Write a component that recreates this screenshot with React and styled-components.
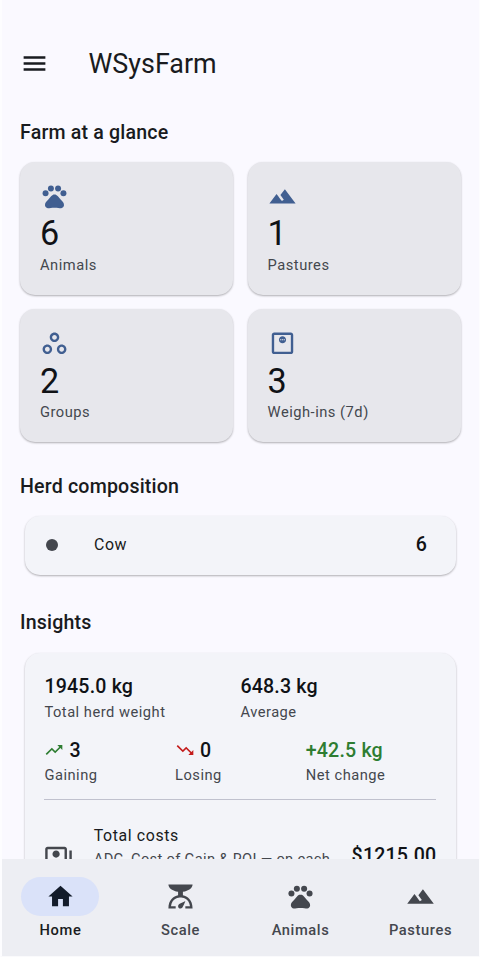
import React from "react";
import styled, { createGlobalStyle } from "styled-components";
import {
  MdHome,
  MdLandscape,
  MdMenu,
  MdOutlineMonitorWeight,
  MdOutlinePayments,
  MdOutlineWorkspaces,
  MdPets,
  MdScale,
  MdTrendingDown,
  MdTrendingUp,
} from "react-icons/md";

const GlobalStyle = createGlobalStyle`
  * {
    box-sizing: border-box;
  }

  body {
    margin: 0;
    background: #faf9ff;
    font-family: Roboto, "Liberation Sans", sans-serif;
    color: #191b20;
  }
`;

const Screen = styled.div`
  display: flex;
  flex-direction: column;
  height: 957px;
  overflow: hidden;
  border-left: 2px solid #fdfdff;
  border-right: 1px solid #fdfdff;
  border-bottom: 1px solid #fafafc;
`;

const AppBar = styled.header`
  display: flex;
  flex: none;
  align-items: center;
  height: 97px;
  padding: 30px 18px 0;
  gap: 39.5px;

  svg {
    margin-top: -1px;
  }
`;

const Title = styled.h1`
  margin: 0;
  font-size: 26.9px;
  font-weight: 400;
  line-height: 34px;
`;

const Content = styled.main`
  flex: 1;
  min-height: 0;
  overflow: hidden;
  padding: 0 18.2px 0 18px;
`;

const SectionTitle = styled.h2`
  margin: ${props => props.$top}px 0 0;
  font-size: 19.6px;
  font-weight: 500;
  line-height: 30px;
  letter-spacing: 0.18px;
`;

const StatGrid = styled.div`
  display: grid;
  grid-template-columns: 1fr 1fr;
  gap: 14.4px;
  margin-top: 13.8px;
`;

const Card = styled.div`
  border-radius: 15px;
  background: ${props => props.$color || "#f3f4f9"};
  box-shadow: 0 1px 2px rgba(0, 0, 0, 0.25), 0 1px 3px rgba(0, 0, 0, 0.06);
`;

const StatCard = styled(Card)`
  display: flex;
  flex-direction: column;
  height: 133px;
  padding: 20px;

  svg {
    color: #415f91;
  }
`;

const StatValue = styled.div`
  padding-top: 2px;
  font-size: 34.2px;
  line-height: 42.4px;
  color: #101216;
`;

const Label = styled.div`
  font-size: 14.7px;
  line-height: 20px;
  letter-spacing: 0.5px;
  color: #44474e;
`;

const HerdRow = styled(Card)`
  display: flex;
  align-items: center;
  height: 59px;
  margin: 14px 4.8px 0;
  padding: 0 29px 0 21px;
`;

const Dot = styled.span`
  width: 12.6px;
  height: 12.6px;
  margin-right: 35.6px;
  border-radius: 50%;
  background: #44474e;
`;

const RowTitle = styled.div`
  font-size: 15.9px;
  line-height: 24px;
  letter-spacing: 0.6px;
`;

const Amount = styled.div`
  margin-left: auto;
  font-size: 19.6px;
  font-weight: 500;
  line-height: 24px;
  letter-spacing: 0.18px;
  color: #101216;
`;

const InsightsCard = styled(Card)`
  height: 330px;
  margin: 15px 4.8px 0;
  padding: 19.4px 19.6px;
`;

const Metrics = styled.div`
  display: grid;
  grid-template-columns: repeat(${props => props.$columns}, 1fr);
  margin-bottom: 14px;
`;

const MetricValue = styled.div`
  display: flex;
  align-items: center;
  gap: 5px;
  font-size: 19.6px;
  font-weight: 500;
  line-height: 29.2px;
  letter-spacing: 0.18px;
  color: ${props => props.$color || "#101216"};

  svg {
    color: ${props => props.$icon};
  }
`;

const Divider = styled.hr`
  margin: 0;
  border: 0;
  border-top: 1px solid #c0c1ce;
`;

const CostRow = styled.div`
  display: flex;
  align-items: flex-start;
  margin-top: 24px;

  > svg {
    flex: none;
    margin: 18px 20.4px 0 0;
    color: #44474e;
  }

  ${Amount} {
    margin-top: 20.6px;
  }
`;

const CostText = styled.div`
  width: 242px;

  ${Label} {
    line-height: 22px;
    letter-spacing: 0.3px;
  }
`;

const NavBar = styled.nav`
  display: grid;
  flex: none;
  grid-template-columns: repeat(4, 120px);
  justify-content: center;
  height: 97px;
  padding: 18px 1px 0 0;
  background: #edeef3;
`;

const NavItem = styled.div`
  display: flex;
  flex-direction: column;
  align-items: center;
  color: ${props => (props.$active ? "#191b20" : "#44474e")};
`;

const NavIcon = styled.div`
  display: flex;
  align-items: center;
  justify-content: center;
  width: 78px;
  height: 39px;
  border-radius: 20px;
  background: ${props => (props.$active ? "#dae2f9" : "transparent")};
  color: ${props => (props.$active ? "#131c2b" : "#44474e")};
`;

const NavLabel = styled.div`
  margin-top: 4px;
  padding-left: 1px;
  font-size: 14.7px;
  font-weight: 500;
  line-height: 21px;
  letter-spacing: 0.6px;
`;

const stats = [
  { label: "Animals", value: 6, Icon: MdPets },
  { label: "Pastures", value: 1, Icon: MdLandscape },
  { label: "Groups", value: 2, Icon: MdOutlineWorkspaces },
  { label: "Weigh-ins (7d)", value: 3, Icon: MdOutlineMonitorWeight },
];

const tabs = [
  { label: "Home", Icon: MdHome, active: true },
  { label: "Scale", Icon: MdScale },
  { label: "Animals", Icon: MdPets },
  { label: "Pastures", Icon: MdLandscape },
];

const App = () => {
  return (
    <>
      <GlobalStyle />
      <Screen>
        <AppBar>
          <MdMenu size={29} />
          <Title>WSysFarm</Title>
        </AppBar>

        <Content>
          <SectionTitle $top={21}>Farm at a glance</SectionTitle>
          <StatGrid>
            {stats.map(({ label, value, Icon }) => (
              <StatCard key={label} $color="#e7e7ec">
                <Icon size={29} />
                <StatValue>{value}</StatValue>
                <Label>{label}</Label>
              </StatCard>
            ))}
          </StatGrid>

          <SectionTitle $top={29.4}>Herd composition</SectionTitle>
          <HerdRow>
            <Dot />
            <RowTitle>Cow</RowTitle>
            <Amount>6</Amount>
          </HerdRow>

          <SectionTitle $top={33.4}>Insights</SectionTitle>
          <InsightsCard>
            <Metrics $columns={2}>
              <div>
                <MetricValue>1945.0 kg</MetricValue>
                <Label>Total herd weight</Label>
              </div>
              <div>
                <MetricValue>648.3 kg</MetricValue>
                <Label>Average</Label>
              </div>
            </Metrics>
            <Metrics $columns={3}>
              <div>
                <MetricValue $icon="#2e7d32">
                  <MdTrendingUp size={20} />3
                </MetricValue>
                <Label>Gaining</Label>
              </div>
              <div>
                <MetricValue $icon="#c41c1c">
                  <MdTrendingDown size={20} />0
                </MetricValue>
                <Label>Losing</Label>
              </div>
              <div>
                <MetricValue $color="#2e7d32">+42.5 kg</MetricValue>
                <Label>Net change</Label>
              </div>
            </Metrics>
            <Divider />
            <CostRow>
              <MdOutlinePayments size={29} />
              <CostText>
                <RowTitle>Total costs</RowTitle>
                <Label>ADG, Cost of Gain &amp; ROI — on each</Label>
              </CostText>
              <Amount>$1215.00</Amount>
            </CostRow>
          </InsightsCard>
        </Content>

        <NavBar>
          {tabs.map(({ label, Icon, active }) => (
            <NavItem key={label} $active={active}>
              <NavIcon $active={active}>
                <Icon size={29} />
              </NavIcon>
              <NavLabel>{label}</NavLabel>
            </NavItem>
          ))}
        </NavBar>
      </Screen>
    </>
  );
};

export default App;
